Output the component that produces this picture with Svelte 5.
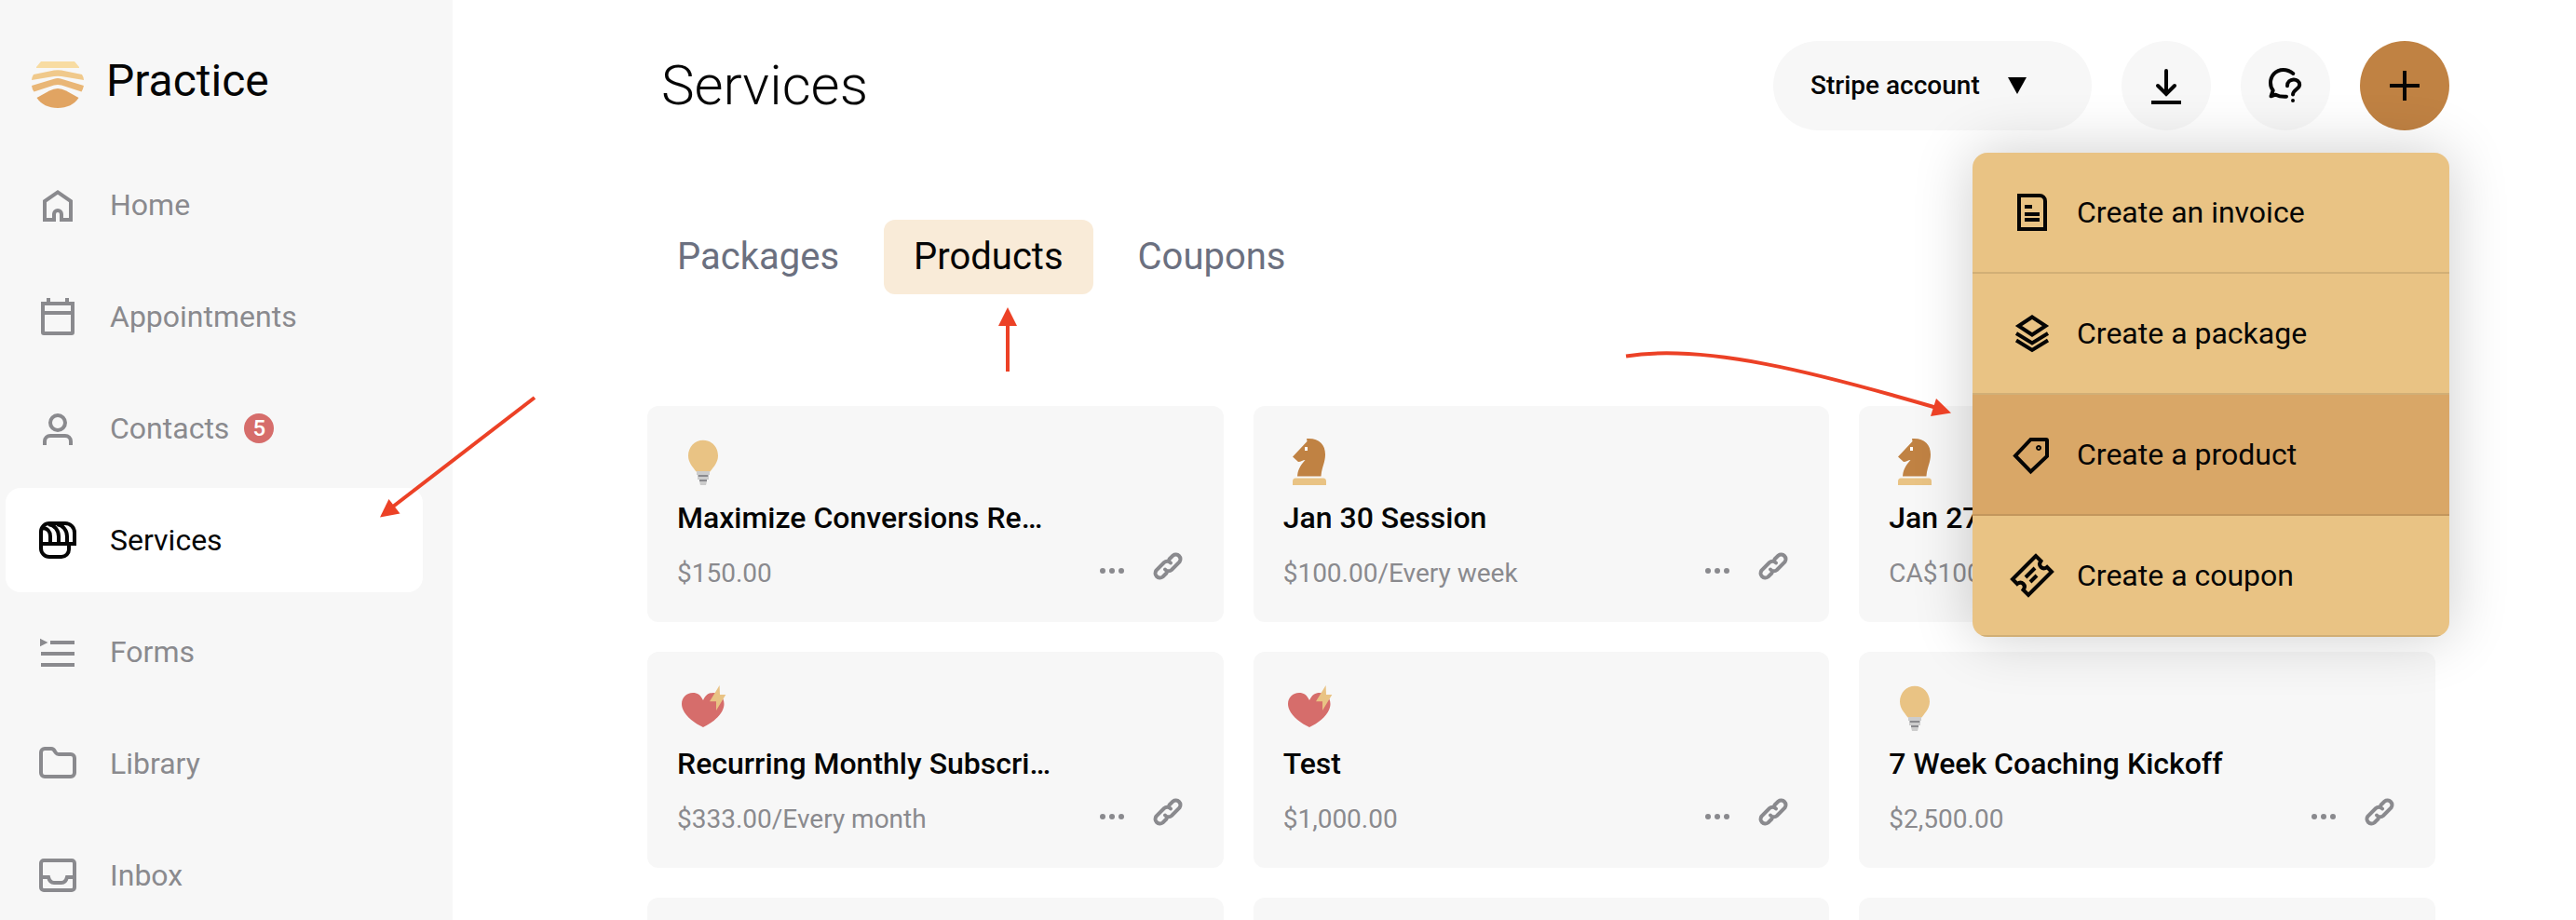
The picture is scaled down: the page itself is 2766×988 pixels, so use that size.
<script lang="ts">
  interface NavItem {
    label: string;
    icon: string;
    badge?: number;
  }

  interface Product {
    title: string;
    price: string;
    icon: "bulb" | "knight" | "heart";
  }

  const navItems: NavItem[] = [
    { label: "Home", icon: "M10 40V20L24 10.4 38 20V40H28V34a4 4 0 0 0-8 0V40Z" },
    { label: "Appointments", icon: "M8 10H40V41a1 1 0 0 1-1 1H9a1 1 0 0 1-1-1ZM8 20H40M14 4V10M34 4V10" },
    {
      label: "Contacts",
      icon: "M32 18a8 8 0 1 1-16 0a8 8 0 1 1 16 0ZM10 42V38a6 6 0 0 1 6-6H32a6 6 0 0 1 6 6V42",
      badge: 5,
    },
    {
      label: "Services",
      icon: "M6 28H42V16A10 10 0 0 0 32 6H15A9 9 0 0 0 6 15V33A9 9 0 0 0 15 42H28A8 8 0 0 0 36 34V28M7 11C13 11 16 15 16 20V28M14 7C21 8 25 14 25 20V28M23 7C30 8 34 14 34 20V28",
    },
    { label: "Forms", icon: "M16 14H42M6 26H42M6 38H42M7 13L9 14 7 15Z" },
    {
      label: "Library",
      icon: "M10 8H17C19 8 20 9 21 11L22 12.5C23 14 23.5 14 25 14H38A4 4 0 0 1 42 18V34A4 4 0 0 1 38 38H10A4 4 0 0 1 6 34V12A4 4 0 0 1 10 8Z",
    },
    {
      label: "Inbox",
      icon: "M9 8H39A3 3 0 0 1 42 11V37A3 3 0 0 1 39 40H9A3 3 0 0 1 6 37V11A3 3 0 0 1 9 8ZM6 26H14C15 30 17 32 20 32H28C31 32 33 30 34 26H42",
    },
  ];

  const tabs = ["Packages", "Products", "Coupons"];

  const menuItems = [
    {
      label: "Create an invoice",
      icon: "M10 6H32A6 6 0 0 1 38 12V42H10ZM16 18H24M16 26H32M16 32H32",
    },
    {
      label: "Create a package",
      icon: "M24 6.5L38.5 16 24 25.5 9.5 16ZM7 24L24 34.5 41 24M7 31.5L24 42 41 31.5",
    },
    {
      label: "Create a product",
      icon: "M22.5 8H39Q40 8 40 9V26L22.5 42.5 6 25.5ZM31 16a1 1 0 1 0 .1 0Z",
    },
    {
      label: "Create a coupon",
      icon: "M28 3L3 28L8 33C10.5 31 13 31.5 14.5 33S16.5 37 14.5 39.5L20 45L45 20L40 15C37.5 17 35 16.5 33.5 15S31.5 11 33.5 8.5ZM17 26L27 16M22 31L29 24",
    },
  ];

  const products: Product[] = [
    { title: "Maximize Conversions Re…", price: "$150.00", icon: "bulb" },
    { title: "Jan 30 Session", price: "$100.00/Every week", icon: "knight" },
    { title: "Jan 27", price: "CA$100.00", icon: "knight" },
    { title: "Recurring Monthly Subscri…", price: "$333.00/Every month", icon: "heart" },
    { title: "Test", price: "$1,000.00", icon: "heart" },
    { title: "7 Week Coaching Kickoff", price: "$2,500.00", icon: "bulb" },
  ];

  let activeNav = $state("Services");
  let activeTab = $state("Products");
  let activeAction = $state("Create a product");
  let menuOpen = $state(true);
</script>

<div class="page">
  <aside class="sidebar">
    <div class="brand">
      <svg width="56" height="62" viewBox="0 -10 56 62" aria-hidden="true">
        <path fill="#f8dca2" d="M10 0H46L51 6V7H5V6Z" />
        <path fill="#f0c98b" d="M2 14L24 9.5Q28 8.8 32 9.5L54 14Q55.5 16 56 20L32 16Q28 15.3 24 16L0 20Q.5 16 2 14Z" />
        <path fill="#e9b676" d="M0 26L24 18.7Q28 17.5 32 18.7L56 26Q55 30 53.5 32.5L32 25.5Q28 24.3 24 25.5L2.5 32.5Q.5 30 0 26Z" />
        <path fill="#e1a462" d="M5.5 39L19 31.5Q28 26.5 37 31.5L50.5 39C46 46 38 50 28 50S10 46 5.5 39Z" />
      </svg>
      <span>Practice</span>
    </div>
    <nav class="nav">
      {#each navItems as item}
        <a
          href="#{item.label.toLowerCase()}"
          class="nav-item"
          class:active={activeNav === item.label}
          onclick={() => (activeNav = item.label)}>
          <svg class="line-icon" width="48" height="48" viewBox="0 0 48 48" aria-hidden="true">
            <path d={item.icon} />
          </svg>
          <span class="nav-label">
            {item.label}
            {#if item.badge}
              <span class="badge">{item.badge}</span>
            {/if}
          </span>
        </a>
      {/each}
    </nav>
  </aside>

  <main class="main">
    <header class="header">
      <h1>Services</h1>
      <div class="tools">
        <div class="account">
          <select aria-label="Account">
            <option>Stripe account</option>
          </select>
          <svg width="20" height="20" viewBox="0 0 20 20" aria-hidden="true">
            <path d="M0 1H20L10 19Z" />
          </svg>
        </div>
        <button class="round" aria-label="Download">
          <svg class="line-icon" width="48" height="48" viewBox="0 0 48 48">
            <path d="M24 8V33M15 24L24 33 33 24" stroke-linecap="round" />
            <path d="M8 42H40" />
          </svg>
        </button>
        <button class="round" aria-label="Help">
          <svg class="line-icon rounded" width="48" height="48" viewBox="0 0 48 48">
            <path d="M32.3 11C29 8.3 25.500 7 21.7 7C13.5 7 8 13.5 8 21C8 24.500 9 27 10.700 29L8.500 35.300L13.5 33.7C17 35.5 20 36 25 35.700" />
            <path d="M26 24.300C26 15.500 39.200 15.500 39.200 23C39.200 27.500 32.500 28 32 33.500M32 40V40.100" />
          </svg>
        </button>
        <div class="create">
          <button
            class="round primary"
            aria-label="Create"
            aria-expanded={menuOpen}
            onclick={() => (menuOpen = !menuOpen)}>
            <svg class="line-icon" width="48" height="48" viewBox="0 0 48 48">
              <path d="M24 8V40M8 24H40" />
            </svg>
          </button>
          {#if menuOpen}
            <div class="menu">
              {#each menuItems as item}
                <button
                  class="menu-item"
                  class:active={activeAction === item.label}
                  onmouseenter={() => (activeAction = item.label)}>
                  <svg class="line-icon" width="48" height="48" viewBox="0 0 48 48" aria-hidden="true">
                    <path d={item.icon} />
                  </svg>
                  {item.label}
                </button>
              {/each}
            </div>
          {/if}
        </div>
      </div>
    </header>

    <div class="tabs" role="tablist">
      {#each tabs as tab}
        <button
          class="tab"
          role="tab"
          class:active={activeTab === tab}
          aria-selected={activeTab === tab}
          onclick={() => (activeTab = tab)}>{tab}</button>
      {/each}
    </div>

    <section class="cards">
      {#each products as product}
        <article class="card">
          <svg width="56" height="56" viewBox="0 0 56 56" aria-hidden="true">
            {#if product.icon === "bulb"}
              <path fill="#e9c384" d="M28 4.7C37 4.7 44 12 44 21.5C44 29 39 33.5 35.5 38.5H20.5C17 33.5 12 29 12 21.5C12 12 19 4.7 28 4.7Z" />
              <path fill="#cccccc" d="M21 38H35V42H21ZM22 44H34V47H22ZM24 49H32L31 53H25Z" />
              <path fill="#8a8a8e" d="M22.5 42H33.5V44H22.5ZM24 47H32V49H24Z" />
            {:else if product.icon === "knight"}
              <path fill="#c08243" d="M25 3C38 2 45 9 45 20C45 29 41 34 40.5 43.5H15C15.5 36 19 31 23.5 26C21 26 19 28 16 28L10 22.5L25.5 6Z" />
              <path fill="#ffffff" d="M23 12H26V16H23Z" />
              <path fill="#e9c384" d="M13 45.5H43Q46 45.5 46 49V53H10V49Q10 45.5 13 45.5Z" />
            {:else}
              <path fill="#d66d6b" d="M28 20C31 14 34 12 39 12C46 12 50.5 17 50.5 24C50.5 34 39 44 28 49C17 44 5 34 5 24C5 17 10 12 17 12C22 12 25 14 28 20Z" />
              <path fill="#e9c384" d="M45.6 4L46 14H52.3L42 31V21.3H35Z" />
            {/if}
          </svg>
          <h2>{product.title}</h2>
          <div class="card-footer">
            <span class="price">{product.price}</span>
            <div class="card-actions">
              <button class="icon-button" aria-label="More options">
                <svg width="40" height="40" viewBox="0 0 40 40">
                  <g fill="#8a8a8e">
                    <circle cx="10" cy="25" r="3" />
                    <circle cx="20" cy="25" r="3" />
                    <circle cx="30" cy="25" r="3" />
                  </g>
                </svg>
              </button>
              <button class="icon-button" aria-label="Copy link">
                <svg class="link-icon" width="40" height="40" viewBox="0 0 40 40">
                  <path d="M21.5 12.5L25.5 8.5a5 5 0 0 1 7 7L24 24a5 5 0 0 1-7-.5" />
                  <path d="M18.5 27.5L14.5 31.5a5 5 0 0 1-7-7L16 16a5 5 0 0 1 7 .5" />
                </svg>
              </button>
            </div>
          </div>
        </article>
      {/each}
      {#each { length: 3 } as _}
        <article class="card"></article>
      {/each}
    </section>
  </main>

  <!-- walkthrough arrows drawn over the page -->
  <svg class="arrows" aria-hidden="true">
    <path class="shaft" d="M574 427L422 544" />
    <path class="head" d="M408 555.5L417.5 536 429.5 551.5Z" />
    <path class="shaft" d="M1082 399V346" />
    <path class="head" d="M1082 330L1092 350H1072Z" />
    <path class="shaft" d="M1746 382.5C1830 369 1950 400 2078 437.5" />
    <path class="head" d="M2095 443.5L2079 428 2073 447Z" />
  </svg>
</div>

<style>
  :global(body) {
    margin: 0;
    background: #fff;
  }

  .page {
    position: relative;
    display: flex;
    height: 100vh;
    overflow: hidden;
    font-family: Roboto, "Liberation Sans", sans-serif;
    font-size: 32px;
    line-height: 40px;
    color: #050505;
  }

  button,
  select {
    font: inherit;
    color: inherit;
    border: none;
    padding: 0;
    background: none;
    cursor: pointer;
  }

  svg {
    display: block;
    flex-shrink: 0;
  }

  .line-icon {
    fill: none;
    stroke: currentColor;
    stroke-width: 4;
  }

  .line-icon.rounded {
    stroke-linecap: round;
    stroke-linejoin: round;
  }

  .sidebar {
    flex: 0 0 486px;
    box-sizing: border-box;
    padding: 56px 32px 0 6px;
    background: #f7f7f7;
  }

  .brand {
    display: flex;
    align-items: center;
    gap: 24px;
    height: 62px;
    padding-left: 28px;
    margin-bottom: 46px;
    font-size: 48px;
  }

  .nav {
    display: flex;
    flex-direction: column;
    gap: 8px;
  }

  .nav-item {
    display: flex;
    align-items: center;
    gap: 32px;
    height: 112px;
    padding-left: 32px;
    border-radius: 16px;
    color: #8a8a8e;
    text-decoration: none;
  }

  .nav-item.active {
    background: #fff;
    color: #050505;
  }

  .nav-label {
    display: flex;
    align-items: center;
    gap: 16px;
  }

  .badge {
    width: 32px;
    border-radius: 50%;
    background: #d66d6b;
    color: #fff;
    font-size: 24px;
    font-weight: 500;
    line-height: 32px;
    text-align: center;
  }

  .main {
    flex: 1;
    min-width: 0;
    padding: 44px 136px 0 209px;
  }

  .header {
    display: flex;
    align-items: center;
    justify-content: space-between;
    height: 96px;
    padding-left: 15px;
    margin-bottom: 96px;
  }

  h1 {
    margin: 0;
    font-size: 60px;
    font-weight: 300;
    line-height: 72px;
  }

  .tools {
    display: flex;
    gap: 32px;
  }

  .account {
    display: grid;
    align-items: center;
    width: 342px;
  }

  .account select {
    grid-area: 1 / 1;
    appearance: none;
    height: 96px;
    padding: 0 40px;
    border-radius: 48px;
    background: #f7f7f7;
    font-size: 28px;
    font-weight: 500;
  }

  .account svg {
    grid-area: 1 / 1;
    justify-self: end;
    margin-right: 70px;
    pointer-events: none;
  }

  .round {
    display: grid;
    place-items: center;
    width: 96px;
    height: 96px;
    border-radius: 50%;
    background: #f7f7f7;
  }

  .round.primary {
    background: #c08243;
  }

  .create {
    position: relative;
  }

  .menu {
    position: absolute;
    z-index: 1;
    top: 120px;
    right: 0;
    width: 512px;
    border-radius: 16px;
    overflow: hidden;
    background: #e9c384;
    box-shadow: 0 0 64px rgba(0, 0, 0, 0.2);
  }

  .menu-item {
    display: flex;
    align-items: center;
    gap: 24px;
    box-sizing: border-box;
    width: 100%;
    height: 130px;
    padding-left: 40px;
    border-bottom: 2px solid rgba(0, 0, 0, 0.1);
  }

  .menu-item.active {
    background: #d9a767;
  }

  .tabs {
    display: flex;
    gap: 16px;
    margin-bottom: 120px;
  }

  .tab {
    height: 80px;
    padding: 0 32px;
    border-radius: 12px;
    font-size: 40px;
    color: #6b7080;
  }

  .tab.active {
    background: #f9ebd8;
    color: #050505;
  }

  .cards {
    display: grid;
    grid-template-columns: repeat(3, 1fr);
    gap: 32px;
    margin-right: 15px;
  }

  .card {
    display: flex;
    flex-direction: column;
    gap: 12px;
    box-sizing: border-box;
    min-width: 0;
    min-height: 232px;
    padding: 32px;
    border-radius: 12px;
    background: #f7f7f7;
  }

  h2 {
    margin: 0;
    font-size: 32px;
    font-weight: 500;
    line-height: 40px;
  }

  .card-footer {
    display: flex;
    align-items: flex-end;
    justify-content: space-between;
    height: 48px;
  }

  .price {
    font-size: 28px;
    color: #8a8a8e;
  }

  .card-actions {
    display: flex;
    gap: 20px;
    height: 48px;
    padding-right: 8px;
  }

  .icon-button {
    height: 40px;
  }

  .link-icon {
    fill: none;
    stroke: #8a8a8e;
    stroke-width: 4;
    stroke-linecap: round;
  }

  .arrows {
    position: absolute;
    z-index: 2;
    inset: 0;
    width: 100%;
    height: 100%;
    pointer-events: none;
  }

  .shaft {
    fill: none;
    stroke: #ec4126;
    stroke-width: 4;
  }

  .head {
    fill: #ec4126;
  }
</style>
